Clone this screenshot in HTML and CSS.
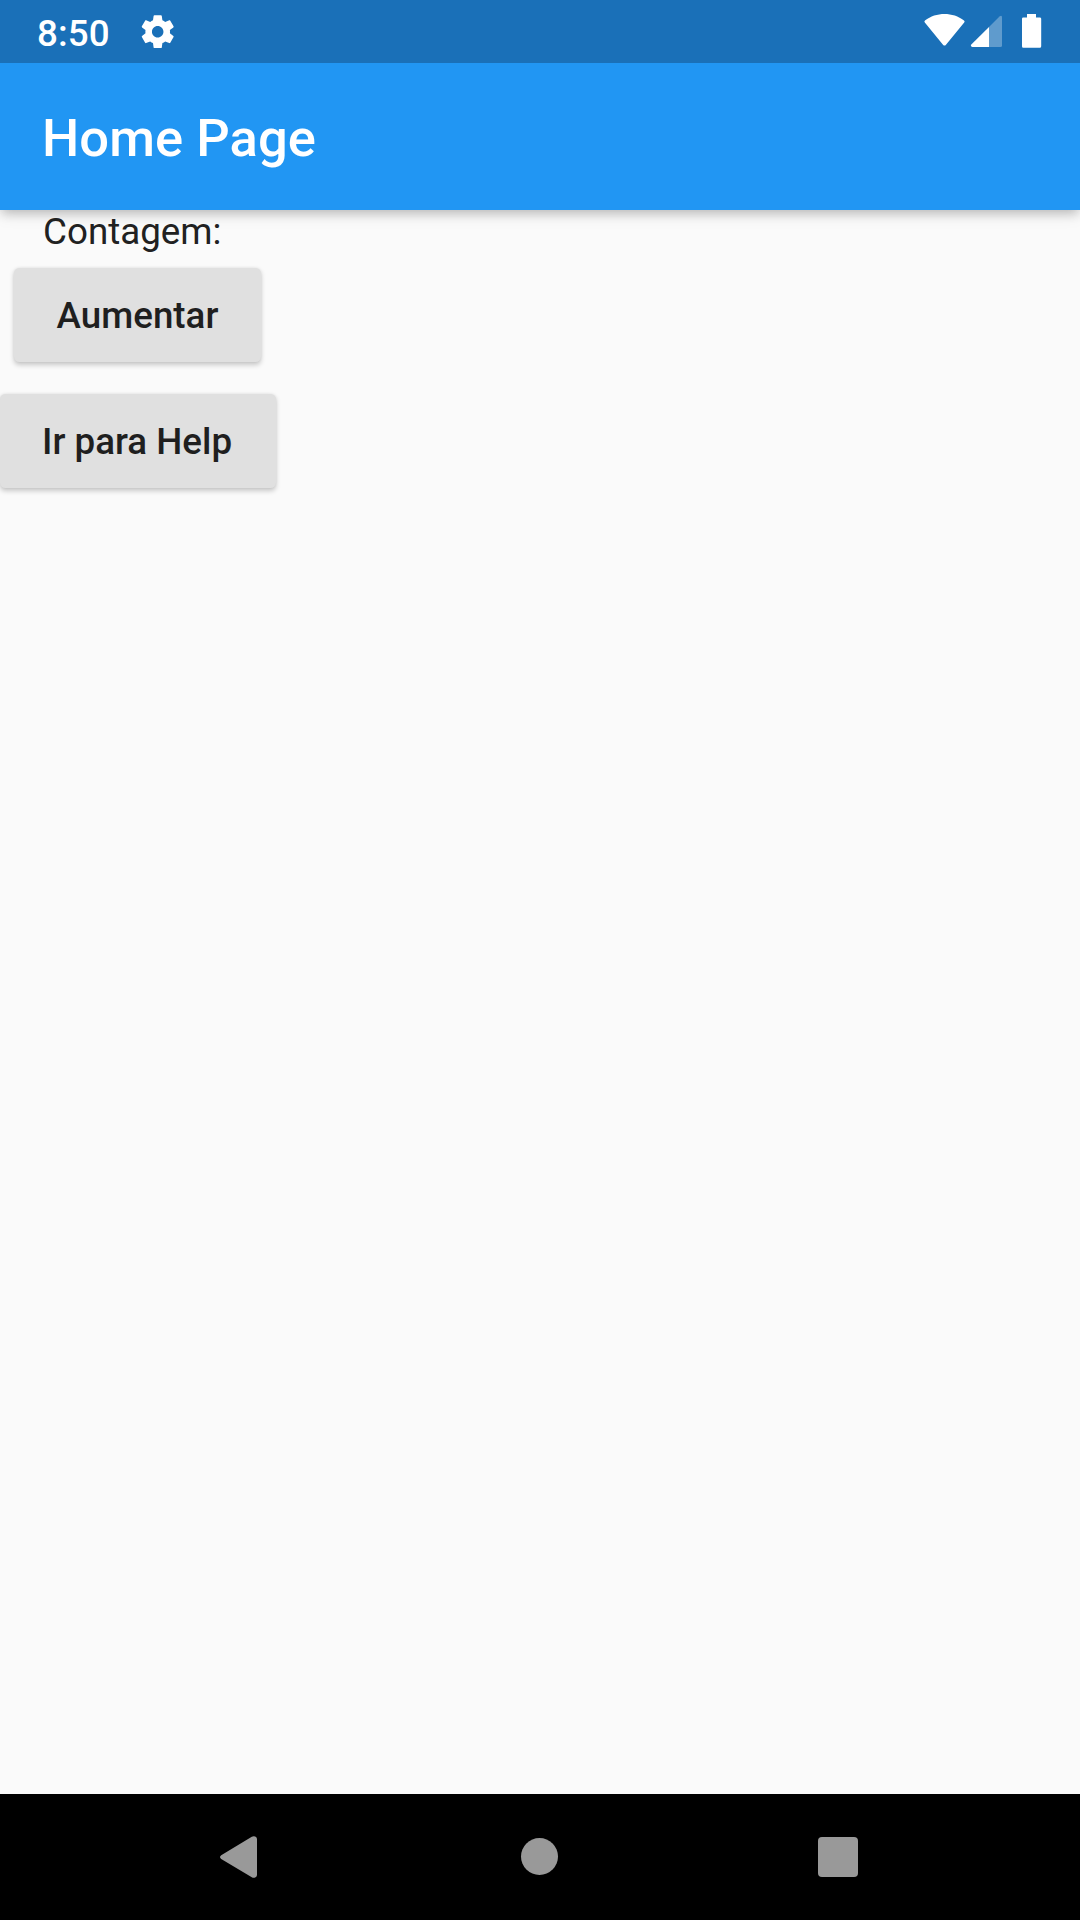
FILE: index.html
```html
<!DOCTYPE html>
<html lang="pt">
<head>
<meta charset="utf-8">
<title>Home Page</title>
<link rel="stylesheet" href="styles.css">
</head>
<body>
<div class="screen">
  <div class="status-bar">
    <span class="clock">8:50</span>
    <svg class="gear" viewBox="0 0 24 24"><path fill="#fff" d="M19.43 12.98c.04-.32.07-.64.07-.98s-.03-.66-.07-.98l2.11-1.65c.19-.15.24-.42.12-.64l-2-3.46c-.12-.22-.39-.3-.61-.22l-2.49 1c-.52-.4-1.08-.73-1.69-.98l-.38-2.65C14.46 2.18 14.25 2 14 2h-4c-.25 0-.46.18-.49.42l-.38 2.65c-.61.25-1.17.59-1.69.98l-2.49-1c-.23-.09-.49 0-.61.22l-2 3.46c-.13.22-.07.49.12.64l2.11 1.65c-.04.32-.07.65-.07.98s.03.66.07.98l-2.11 1.65c-.19.15-.24.42-.12.64l2 3.46c.12.22.39.3.61.22l2.49-1c.52.4 1.08.73 1.69.98l.38 2.65c.03.24.24.42.49.42h4c.25 0 .46-.18.49-.42l.38-2.65c.61-.25 1.17-.59 1.69-.98l2.49 1c.23.09.49 0 .61-.22l2-3.46c.12-.22.07-.49-.12-.64l-2.11-1.65zM12 15.5c-1.93 0-3.5-1.57-3.5-3.5s1.57-3.5 3.5-3.5 3.5 1.57 3.5 3.5-1.57 3.5-3.5 3.5z"/></svg>
    <svg class="indicators" viewBox="920 0 124 63">
      <path fill="#fff" d="M924.8 22.6Q923.8 21.4 925 20.4C936 11.8 953 11.8 964 20.4Q965.2 21.4 964.2 22.6L945.8 44.9Q944.5 46.3 943.2 44.9Z"/>
      <path fill="#fff" fill-opacity=".3" d="M989 27L999.5 16.6Q1002 14.8 1002 17.4V45.5Q1002 47 1000.5 47H989Z"/>
      <path fill="#fff" d="M989 27V47H972.3Q970 46.6 971.3 44.6Z"/>
      <path fill="#fff" d="M1027 14H1036V17.4H1039.8Q1041.2 17.4 1041.2 18.8V46.3Q1041.2 47.8 1039.8 47.8H1023.3Q1022 47.8 1022 46.3V18.8Q1022 17.4 1023.3 17.4H1027Z"/>
    </svg>
  </div>
  <header class="app-bar"><h1 class="title">Home Page</h1></header>
  <main class="content">
    <div class="counter">
      <p class="label">Contagem:</p>
      <button class="btn btn-increase">Aumentar</button>
    </div>
    <button class="btn btn-help">Ir para Help</button>
  </main>
  <nav class="nav-bar">
    <svg class="nav-back" viewBox="0 0 37 42"><path fill="#999" d="M1.2 19.2L31.8.7Q33.5-.3 35.2.5Q37 1.2 37 3V39Q37 40.8 35.2 41.5Q33.5 42.3 31.8 41.3L1.2 22.9Q-1.2 21 1.2 19.2Z"/></svg>
    <span class="nav-home"></span>
    <span class="nav-recents"></span>
  </nav>
</div>
</body>
</html>
```

FILE: styles.css
```css
body {
  margin: 0;
  font-family: Roboto, sans-serif;
}

.screen {
  width: 1080px;
  height: 1920px;
  display: flex;
  flex-direction: column;
  overflow: hidden;
  background: #fafafa;
}

.status-bar {
  box-sizing: border-box;
  position: relative;
  z-index: 1;
  height: 63px;
  flex: none;
  display: flex;
  align-items: center;
  padding: 0 36px 0 37px;
  background: #1a70b8;
  color: #fff;
}

.clock {
  width: 100.5px;
  font-size: 36.75px;
  font-weight: 500;
  line-height: 43px;
  letter-spacing: .1px;
  padding-top: 3px;
}

.gear {
  width: 39.4px;
  height: 39.4px;
}

.indicators {
  width: 124px;
  height: 63px;
  margin-left: auto;
}

.app-bar {
  box-sizing: border-box;
  height: 147px;
  flex: none;
  display: flex;
  align-items: center;
  padding: 2px 0 0 42px;
  background: #2196f3;
  color: #fff;
  box-shadow: 0 5px 10px -2px rgba(0, 0, 0, .2), 0 4px 16px rgba(0, 0, 0, .1);
}

.title {
  margin: 0;
  font-size: 52.5px;
  font-weight: 500;
  line-height: 62px;
  letter-spacing: .06px;
}

.content {
  flex: 1;
  display: flex;
  flex-direction: column;
  align-items: flex-start;
  gap: 32px;
}

.counter {
  display: flex;
  flex-direction: column;
  padding-left: 14px;
}

.label {
  margin: 0 0 15px 29px;
  font-size: 36.75px;
  line-height: 43px;
  color: #212121;
}

.btn {
  height: 94px;
  padding: 0;
  border: 0;
  border-radius: 5.25px;
  background: #e0e0e0;
  color: #1f1f1f;
  font-family: inherit;
  font-size: 36.75px;
  font-weight: 500;
  box-shadow: 0 2.6px 5.25px rgba(0, 0, 0, .2), 0 0 3px rgba(0, 0, 0, .06);
}

.btn-increase {
  width: 247px;
}

.btn-help {
  width: 276px;
  padding-right: 2px;
}

.nav-bar {
  box-sizing: border-box;
  height: 126px;
  flex: none;
  display: flex;
  align-items: center;
  padding-left: 220px;
  background: #000;
}

.nav-back {
  width: 37px;
  height: 42px;
}

.nav-home {
  width: 37px;
  height: 37px;
  margin: 0 260px 1px 264px;
  border-radius: 50%;
  background: #999;
}

.nav-recents {
  width: 40px;
  height: 40px;
  border-radius: 4px;
  background: #999;
}
```
